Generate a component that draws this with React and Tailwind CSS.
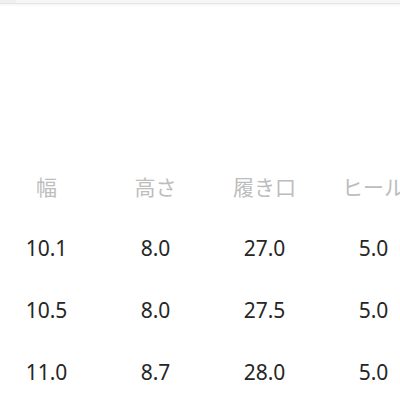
export default function App() {
  const headers = ["幅", "高さ", "履き口", "ヒール"];
  const rows = [
    ["10.1", "8.0", "27.0", "5.0"],
    ["10.5", "8.0", "27.5", "5.0"],
    ["11.0", "8.7", "28.0", "5.0"],
  ];
  return (
    <div className="w-[400px] h-[400px] overflow-hidden bg-white" style={{ fontFamily: '"Noto Sans", "Noto Sans CJK JP", sans-serif' }}>
      <div className="h-[4px] bg-[#f6f6f6] border-b border-[#e6e6e6] shadow-[0_1px_3px_rgba(0,0,0,0.06)] flex">
        <div className="w-[16px] bg-[#efefef]" />
      </div>
      <div className="h-[152px]" />
      <div className="ml-[-8px] grid grid-cols-[repeat(4,109px)] auto-rows-[62px] w-max text-[21px]">
        {headers.map((h) => (
          <div key={h} className="flex items-center justify-center text-[#bdbdbd] whitespace-nowrap" style={{ fontFamily: '"Noto Sans CJK JP", sans-serif' }}>
            {h}
          </div>
        ))}
        {rows.map((r, i) =>
          r.map((v, j) => (
            <div key={i + "-" + j} className="flex items-center justify-center text-[#262626]">
              {v}
            </div>
          ))
        )}
      </div>
    </div>
  );
}
